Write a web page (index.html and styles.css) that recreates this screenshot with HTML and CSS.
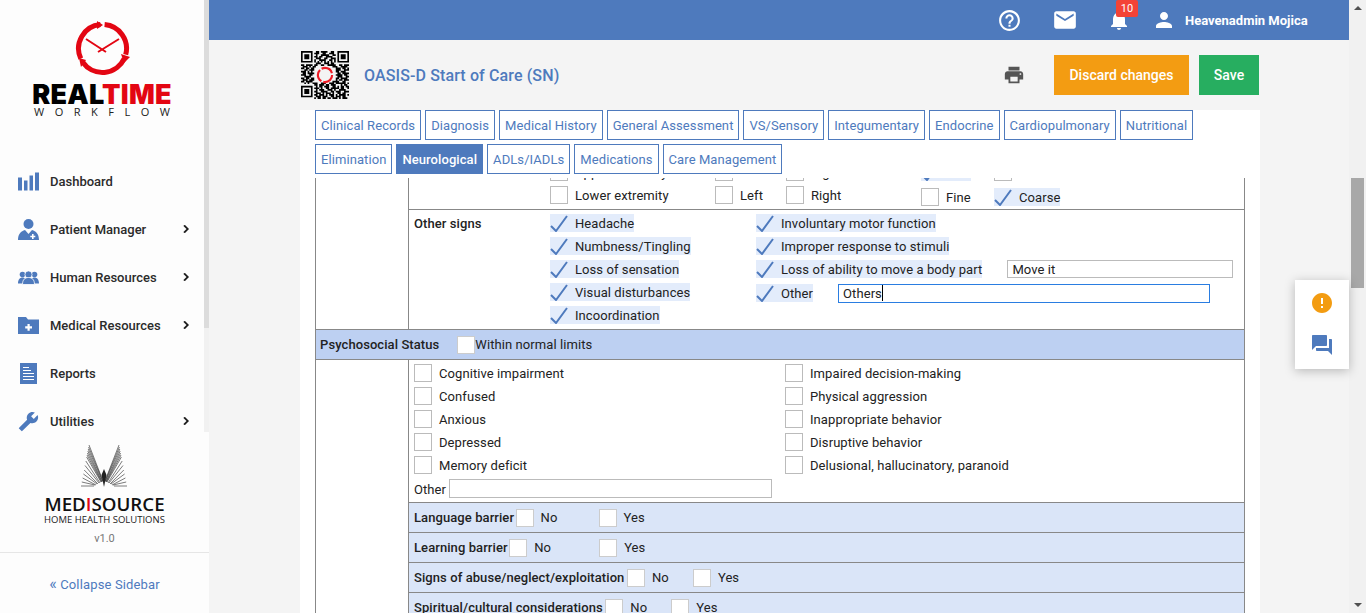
FILE: index.html
```html
<!DOCTYPE html>
<html lang="en">
<head>
  <meta charset="UTF-8" />
  <title>OASIS-D Start of Care (SN)</title>
  <link rel="stylesheet" href="styles.css">
</head>
<body>
  <aside class="sidebar">
    <div class="side-top">
      <div class="side-scroll">
        <div class="brand">
          <svg class="clock" viewBox="74 20 57 57" width="57" height="57">
            <g fill="none" stroke="#e30613" stroke-width="5">
              <path d="M104.600 24.600A24 24 0 0 1 125.700 54.700" />
              <path d="M124.200 58.600A24 24 0 0 1 82.800 62.300" />
              <path d="M80.800 58.600A24 24 0 0 1 100.400 24.600" />
            </g>
            <g fill="#e30613">
              <polygon points="97,21 97,29 103,25" />
              <polygon points="121,54 130,57 124,63" />
              <polygon points="86,60 81,67 79,58" />
            </g>
            <path d="M86 39L106 52M119 39L98 52" stroke="#e30613" stroke-width="2" fill="none" />
          </svg>
          <div class="brand-name">REAL<span>TIME</span></div>
          <div class="brand-sub">WORKFLOW</div>
        </div>
        <nav class="nav">
          <a class="nav-item">
            <svg class="nav-icon" viewBox="0 0 21 18"><path d="M0 5h4v13H0zM6 8h3.500v10H6zM11.500 3H15v15h-3.500zM17 0h4v18h-4z" /></svg>
            <span>Dashboard</span>
          </a>
          <a class="nav-item">
            <svg class="nav-icon" viewBox="0 0 21 21"><circle cx="10.500" cy="5" r="5" /><path d="M0 21c0-6 3-9 7-10l3.500 4 3.500-4c4 1 7 4 7 10z" /><path d="M14 15h1.600v1.700h1.700v1.600h-1.700V20H14v-1.700h-1.700v-1.600H14z" fill="#fff" /></svg>
            <span>Patient Manager</span>
            <svg class="chev" viewBox="0 0 24 24"><path d="M8.590 16.590L13.170 12 8.590 7.410 10 6l6 6-6 6z" /></svg>
          </a>
          <a class="nav-item">
            <svg class="nav-icon" viewBox="0 0 21 14"><circle cx="4.500" cy="4" r="2.800" /><circle cx="16.500" cy="4" r="2.800" /><path d="M0 13c0-4 2-6 4.500-6S9 9 9 13zM12 13c0-4 2-6 4.500-6s4.500 2 4.500 6z" /><circle cx="10.500" cy="4" r="3.600" stroke="#fff" stroke-width="0.8" /><path d="M4.500 14c0-5 2.500-7 6-7s6 2 6 7z" stroke="#fff" stroke-width="0.8" /></svg>
            <span>Human Resources</span>
            <svg class="chev" viewBox="0 0 24 24"><path d="M8.590 16.590L13.170 12 8.590 7.410 10 6l6 6-6 6z" /></svg>
          </a>
          <a class="nav-item">
            <svg class="nav-icon" viewBox="0 0 21 17"><path d="M0 0h8l2 2.500h11V17H0z" /><path d="M9.500 7h2.200v2.300H14v2.200h-2.300v2.300H9.500v-2.300H7.200V9.300h2.300z" fill="#fff" /></svg>
            <span>Medical Resources</span>
            <svg class="chev" viewBox="0 0 24 24"><path d="M8.590 16.590L13.170 12 8.590 7.410 10 6l6 6-6 6z" /></svg>
          </a>
          <a class="nav-item">
            <svg class="nav-icon" viewBox="0 0 21 21"><path d="M2 0h17v21H2z" /><path d="M5 4h6v1H5zM5 7h8v1H5zM5 10h11v1H5zM5 13h11v1H5zM5 16h11v1H5z" fill="#fff" /></svg>
            <span>Reports</span>
          </a>
          <a class="nav-item">
            <svg class="nav-icon" viewBox="0 0 24 24"><path transform="translate(24 0) scale(-1 1)" d="M22.700 19l-9.100-9.100c.9-2.300.4-5-1.500-6.900-2-2-5-2.400-7.400-1.300L9 6 6 9 1.600 4.700C.4 7.100.9 10.100 2.900 12.100c1.900 1.900 4.600 2.400 6.900 1.500l9.100 9.100c.4.4 1 .4 1.400 0l2.300-2.300c.5-.4.5-1.100.1-1.400z" /></svg>
            <span>Utilities</span>
            <svg class="chev" viewBox="0 0 24 24"><path d="M8.590 16.590L13.170 12 8.590 7.410 10 6l6 6-6 6z" /></svg>
          </a>
        </nav>
      </div>
      <div class="side-track"><div class="side-thumb"></div></div>
    </div>
    <div class="partner">
      <svg class="partner-mark" viewBox="78 442 54 46" width="54" height="46">
        <g fill="none" stroke="#444" stroke-width="0.7">
          <path d="M90 444L104 480M89.600 446L103.800 480M89.200 448L103.500 480M88.800 450L103.200 481M88.400 452L103 481M88 454L102.500 481M87.600 456L102 481M86.800 460L101 482M86 464.500L100 482M85.200 469L99 483M84.400 473L98 483M83.600 477L97 484M82.800 481L96 484M82 485L95 485" />
          <path transform="translate(210 0) scale(-1 1)" d="M90 444L104 480M89.600 446L103.800 480M89.200 448L103.500 480M88.800 450L103.200 481M88.400 452L103 481M88 454L102.500 481M87.600 456L102 481M86.800 460L101 482M86 464.500L100 482M85.200 469L99 483M84.400 473L98 483M83.600 477L97 484M82.800 481L96 484M82 485L95 485" />
        </g>
        <path d="M102.500 474L105 468L107.500 474L105 486z" fill="#222" />
      </svg>
      <div class="partner-name">MED<span>I</span>SOURCE</div>
      <div class="partner-sub">HOME HEALTH SOLUTIONS</div>
      <div class="version">v1.0</div>
    </div>
    <div class="collapse"><span class="collapse-arrows">&laquo;</span> Collapse Sidebar</div>
  </aside>

  <div class="main">
    <header class="topbar">
      <svg class="top-icon help" viewBox="0 0 24 24"><path d="M11 18h2v-2h-2v2zm1-16C6.480 2 2 6.480 2 12s4.480 10 10 10 10-4.480 10-10S17.520 2 12 2zm0 18c-4.410 0-8-3.590-8-8s3.590-8 8-8 8 3.590 8 8-3.590 8-8 8zm0-14c-2.210 0-4 1.790-4 4h2c0-1.100.9-2 2-2s2 .9 2 2c0 2-3 1.750-3 5h2c0-2.250 3-2.500 3-5 0-2.210-1.790-4-4-4z" /></svg>
      <svg class="top-icon mail" viewBox="0 0 24 24"><path d="M20 4H4c-1.100 0-1.990.9-1.990 2L2 18c0 1.100.9 2 2 2h16c1.100 0 2-.9 2-2V6c0-1.100-.9-2-2-2zm0 4l-8 5-8-5V6l8 5 8-5v2z" /></svg>
      <div class="bell-wrap">
        <svg class="top-icon" viewBox="0 0 24 24"><path d="M12 22c1.100 0 2-.9 2-2h-4c0 1.100.89 2 2 2zm6-6v-5c0-3.070-1.640-5.640-4.500-6.320V4c0-.83-.67-1.500-1.500-1.500s-1.500.67-1.500 1.500v.68C7.630 5.360 6 7.920 6 11v5l-2 2v1h16v-1l-2-2z" /></svg>
        <span class="badge">10</span>
      </div>
      <svg class="top-icon person" viewBox="0 0 24 24"><path d="M12 12c2.210 0 4-1.790 4-4s-1.790-4-4-4-4 1.790-4 4 1.790 4 4 4zm0 2c-2.670 0-8 1.340-8 4v2h16v-2c0-2.660-5.330-4-8-4z" /></svg>
      <span class="user-name">Heavenadmin Mojica</span>
    </header>

    <div class="content">
      <div class="page-head">
        <svg class="qr" viewBox="0 0 29 29" width="48" height="48">
          <path fill="none" stroke="#000" d="M0 .5h7M9 .5h2M12 .5h4M18 .5h2M22 .5h7
            M0 1.500h1M6 1.500h1M8 1.500h3M13 1.500h2M17 1.500h3M22 1.500h1M28 1.500h1
            M0 2.500h1M2 2.500h3M6 2.500h1M9 2.500h1M12 2.500h5M19 2.500h2M22 2.500h1M24 2.500h3M28 2.500h1
            M0 3.500h1M2 3.500h3M6 3.500h1M8 3.500h2M11 3.500h2M15 3.500h4M22 3.500h1M24 3.500h3M28 3.500h1
            M0 4.500h1M2 4.500h3M6 4.500h1M9 4.500h3M14 4.500h2M18 4.500h3M22 4.500h1M24 4.500h3M28 4.500h1
            M0 5.500h1M6 5.500h1M8 5.500h1M11 5.500h4M17 5.500h2M20 5.500h1M22 5.500h1M28 5.500h1
            M0 6.500h7M8 6.500h1M10 6.500h1M12 6.500h1M14 6.500h1M16 6.500h1M18 6.500h1M20 6.500h1M22 6.500h7
            M9 7.500h3M14 7.500h3M18 7.500h2
            M0 8.500h2M3 8.500h4M8 8.500h2M12 8.500h2M16 8.500h5M23 8.500h2M26 8.500h3
            M1 9.500h3M5 9.500h1M7 9.500h2M19 9.500h3M24 9.500h4
            M0 10.500h2M3 10.500h2M6 10.500h2M21 10.500h3M25 10.500h2M28 10.500h1
            M2 11.500h2M5 11.500h3M21 11.500h3M26 11.500h3
            M0 12.500h3M4 12.500h1M6 12.500h1M21 12.500h2M24 12.500h3
            M1 13.500h2M4 13.500h4M22 13.500h2M25 13.500h4
            M0 14.500h3M5 14.500h2M21 14.500h4M26 14.500h2
            M2 15.500h4M22 15.500h3M27 15.500h2
            M0 16.500h2M3 16.500h2M6 16.500h2M21 16.500h2M24 16.500h4
            M1 17.500h3M5 17.500h3M21 17.500h1M23 17.500h2M26 17.500h3
            M0 18.500h2M3 18.500h4M19 18.500h4M25 18.500h2
            M2 19.500h1M4 19.500h1M7 19.500h3M12 19.500h3M17 19.500h3M21 19.500h6M28 19.500h1
            M8 20.500h2M11 20.500h3M15 20.500h2M18 20.500h3M24 20.500h1M26 20.500h2
            M0 21.500h7M9 21.500h1M11 21.500h2M14 21.500h3M19 21.500h2M22 21.500h1M24 21.500h2M27 21.500h2
            M0 22.500h1M6 22.500h1M8 22.500h3M12 22.500h1M15 22.500h2M18 22.500h5M24 22.500h2M28 22.500h1
            M0 23.500h1M2 23.500h3M6 23.500h1M9 23.500h1M11 23.500h3M16 23.500h3M20 23.500h1M23 23.500h4
            M0 24.500h1M2 24.500h3M6 24.500h1M8 24.500h2M12 24.500h4M18 24.500h2M21 24.500h3M26 24.500h3
            M0 25.500h1M2 25.500h3M6 25.500h1M9 25.500h3M13 25.500h1M15 25.500h3M19 25.500h1M22 25.500h2M25 25.500h2
            M0 26.500h1M6 26.500h1M8 26.500h2M11 26.500h3M15 26.500h1M17 26.500h3M21 26.500h1M23 26.500h4M28 26.500h1
            M0 27.500h7M9 27.500h3M13 27.500h3M18 27.500h2M21 27.500h3M25 27.500h2
            M8 28.500h1M10 28.500h2M13 28.500h2M16 28.500h2M19 28.500h3M23 28.500h1M25 28.500h3" />
          <circle cx="14.500" cy="14.500" r="4.300" fill="none" stroke="#ee1c25" stroke-width="1.300" stroke-dasharray="7.800 1.200" />
        </svg>
        <h1 class="page-title">OASIS-D Start of Care (SN)</h1>
        <svg class="print" viewBox="0 0 24 24"><path d="M19 8H5c-1.660 0-3 1.340-3 3v6h4v4h12v-4h4v-6c0-1.660-1.340-3-3-3zm-3 11H8v-5h8v5zm3-7c-.55 0-1-.45-1-1s.45-1 1-1 1 .45 1 1-.45 1-1 1zm-1-9H6v4h12V3z" /></svg>
        <button class="btn btn-discard">Discard changes</button>
        <button class="btn btn-save">Save</button>
      </div>

      <div class="panel">
        <div class="tabs">
          <a class="tab">Clinical Records</a>
          <a class="tab">Diagnosis</a>
          <a class="tab">Medical History</a>
          <a class="tab">General Assessment</a>
          <a class="tab">VS/Sensory</a>
          <a class="tab">Integumentary</a>
          <a class="tab">Endocrine</a>
          <a class="tab">Cardiopulmonary</a>
          <a class="tab">Nutritional</a>
          <a class="tab">Elimination</a>
          <a class="tab active">Neurological</a>
          <a class="tab">ADLs/IADLs</a>
          <a class="tab">Medications</a>
          <a class="tab">Care Management</a>
        </div>

        <div class="sheet">
          <div class="row clipped-row">
            <div class="row-side"></div>
            <div class="row-body clipped-body">
              <div class="extremity">
                <label class="opt col-a"><i class="box"></i>Upper extremity</label>
                <label class="opt col-b"><i class="box"></i>Left</label>
                <label class="opt col-c"><i class="box"></i>Right</label>
                <label class="opt col-d checked"><i class="box"><svg viewBox="0 0 18 18"><path d="M1 12l5 5L17 2" /></svg></i>Gross</label>
                <label class="opt col-e"><i class="box"></i>Slow</label>
              </div>
              <div class="extremity">
                <label class="opt col-a"><i class="box"></i>Lower extremity</label>
                <label class="opt col-b"><i class="box"></i>Left</label>
                <label class="opt col-c"><i class="box"></i>Right</label>
                <label class="opt col-d raised"><i class="box"></i>Fine</label>
                <label class="opt col-e raised checked"><i class="box"><svg viewBox="0 0 18 18"><path d="M1 12l5 5L17 2" /></svg></i>Coarse</label>
              </div>
            </div>
          </div>

          <div class="row">
            <div class="row-side"></div>
            <div class="row-body signs">
              <div class="signs-title">Other signs</div>
              <div class="signs-col">
                <label class="opt checked"><i class="box"><svg viewBox="0 0 18 18"><path d="M1 12l5 5L17 2" /></svg></i>Headache</label>
                <label class="opt checked"><i class="box"><svg viewBox="0 0 18 18"><path d="M1 12l5 5L17 2" /></svg></i>Numbness/Tingling</label>
                <label class="opt checked"><i class="box"><svg viewBox="0 0 18 18"><path d="M1 12l5 5L17 2" /></svg></i>Loss of sensation</label>
                <label class="opt checked"><i class="box"><svg viewBox="0 0 18 18"><path d="M1 12l5 5L17 2" /></svg></i>Visual disturbances</label>
                <label class="opt checked"><i class="box"><svg viewBox="0 0 18 18"><path d="M1 12l5 5L17 2" /></svg></i>Incoordination</label>
              </div>
              <div class="signs-col">
                <label class="opt checked"><i class="box"><svg viewBox="0 0 18 18"><path d="M1 12l5 5L17 2" /></svg></i>Involuntary motor function</label>
                <label class="opt checked"><i class="box"><svg viewBox="0 0 18 18"><path d="M1 12l5 5L17 2" /></svg></i>Improper response to stimuli</label>
                <div class="opt-line">
                  <label class="opt checked"><i class="box"><svg viewBox="0 0 18 18"><path d="M1 12l5 5L17 2" /></svg></i>Loss of ability to move a body part</label>
                  <div class="field field-move">Move it</div>
                </div>
                <div class="opt-line other-line">
                  <label class="opt checked"><i class="box"><svg viewBox="0 0 18 18"><path d="M1 12l5 5L17 2" /></svg></i>Other</label>
                  <div class="field field-other"><span class="caret">Others</span></div>
                </div>
              </div>
            </div>
          </div>

          <div class="section-head">
            <strong>Psychosocial Status</strong>
            <i class="box"></i>Within normal limits
          </div>

          <div class="row">
            <div class="row-side"></div>
            <div class="row-body psycho">
              <div class="psycho-cols">
                <div class="psycho-col">
                  <label class="opt"><i class="box"></i>Cognitive impairment</label>
                  <label class="opt"><i class="box"></i>Confused</label>
                  <label class="opt"><i class="box"></i>Anxious</label>
                  <label class="opt"><i class="box"></i>Depressed</label>
                  <label class="opt"><i class="box"></i>Memory deficit</label>
                </div>
                <div class="psycho-col">
                  <label class="opt"><i class="box"></i>Impaired decision-making</label>
                  <label class="opt"><i class="box"></i>Physical aggression</label>
                  <label class="opt"><i class="box"></i>Inappropriate behavior</label>
                  <label class="opt"><i class="box"></i>Disruptive behavior</label>
                  <label class="opt"><i class="box"></i>Delusional, hallucinatory, paranoid</label>
                </div>
              </div>
              <div class="other-field"><span class="other-label">Other</span><div class="field field-psycho"></div></div>
            </div>
          </div>

          <div class="row">
            <div class="row-side"></div>
            <div class="row-body yn yn-language">
              <strong>Language barrier</strong>
              <span class="yn-no"><i class="box"></i>No</span>
              <span class="yn-yes"><i class="box"></i>Yes</span>
            </div>
          </div>
          <div class="row">
            <div class="row-side"></div>
            <div class="row-body yn yn-learning">
              <strong>Learning barrier</strong>
              <span class="yn-no"><i class="box"></i>No</span>
              <span class="yn-yes"><i class="box"></i>Yes</span>
            </div>
          </div>
          <div class="row">
            <div class="row-side"></div>
            <div class="row-body yn">
              <strong>Signs of abuse/neglect/exploitation</strong>
              <span class="yn-no"><i class="box"></i>No</span>
              <span class="yn-yes"><i class="box"></i>Yes</span>
            </div>
          </div>
          <div class="row">
            <div class="row-side"></div>
            <div class="row-body yn">
              <strong>Spiritual/cultural considerations</strong>
              <span class="yn-no"><i class="box"></i>No</span>
              <span class="yn-yes"><i class="box"></i>Yes</span>
            </div>
          </div>
        </div>
      </div>
    </div>

    <div class="float-card">
      <svg class="float-icon alert" viewBox="0 0 24 24"><path d="M12 2C6.480 2 2 6.480 2 12s4.480 10 10 10 10-4.480 10-10S17.520 2 12 2zm1 15h-2v-2h2v2zm0-4h-2V7h2v6z" /></svg>
      <svg class="float-icon chat" viewBox="0 0 24 24"><path d="M21 6h-2v9H6v2c0 .55.45 1 1 1h11l4 4V7c0-.55-.45-1-1-1zm-4 6V3c0-.55-.45-1-1-1H3c-.55 0-1 .45-1 1v14l4-4h10c.55 0 1-.45 1-1z" /></svg>
    </div>
  </div>

  <div class="page-scroll">
    <i class="arrow-up"></i>
    <div class="page-thumb"></div>
    <i class="arrow-down"></i>
  </div>
</body>
</html>
```

FILE: styles.css
```css
* {
  box-sizing: border-box;
}

html, body {
  height: 100%;
}

body {
  margin: 0;
  display: flex;
  height: 613px;
  overflow: hidden;
  font-family: Roboto, "Liberation Sans", sans-serif;
  font-size: 13px;
  color: #222;
  background-color: #f4f4f4;
}

/* sidebar */
.sidebar {
  width: 209px;
  flex: none;
  display: flex;
  flex-direction: column;
  background-color: #fdfdfd;
}

.side-top {
  height: 432px;
  display: flex;
  flex: none;
}

.side-scroll {
  flex: 1;
  overflow: hidden;
}

.side-track {
  width: 5px;
  background-color: #f1f1f1;
}

.side-thumb {
  height: 328px;
  background-color: #dcdcdc;
}

.brand {
  height: 157px;
  padding-top: 20px;
  display: flex;
  flex-direction: column;
  align-items: center;
  overflow: hidden;
}

.clock {
  display: block;
  flex: none;
}

.brand-name {
  margin-top: 6px;
  font-family: Inter, "Liberation Sans", sans-serif;
  font-weight: 900;
  font-size: 27px;
  line-height: 23px;
  letter-spacing: 0.2px;
  color: #000;
}

.brand-name span {
  color: #e30613;
}

.brand-sub {
  font-family: "Open Sans", sans-serif;
  font-size: 11px;
  line-height: 12px;
  letter-spacing: 10.5px;
  margin-right: -10.5px;
  color: #222;
}

.nav-item {
  height: 48px;
  display: flex;
  align-items: center;
  padding-left: 18px;
  font-weight: 500;
  color: #2b2b2b;
}

.nav-icon {
  width: 21px;
  height: 21px;
  margin-right: 11px;
  flex: none;
  fill: #4e7abd;
}

.chev {
  width: 16px;
  height: 16px;
  margin-left: auto;
  margin-right: 10px;
  fill: #111;
  stroke: #111;
  stroke-width: 0.8;
}

.partner {
  height: 121px;
  flex: none;
  border-bottom: 1px solid #e6e6e6;
  padding-top: 11px;
  display: flex;
  flex-direction: column;
  align-items: center;
}

.partner-mark {
  display: block;
  flex: none;
  margin-left: -1px;
}

.partner-name {
  margin-top: 5px;
  font-family: "Open Sans", sans-serif;
  font-weight: 600;
  font-size: 18.7px;
  line-height: 20px;
  color: #111;
}

.partner-name span {
  color: #e30613;
}

.partner-sub {
  font-family: "Open Sans", sans-serif;
  font-size: 9.500px;
  line-height: 11px;
  color: #222;
}

.version {
  margin-top: 7px;
  font-size: 11px;
  color: #777;
}

.collapse {
  padding-top: 23px;
  text-align: center;
  color: #4e7abd;
  line-height: 15px;
  letter-spacing: 0.15px;
}

.collapse-arrows {
  font-size: 16px;
  line-height: 15px;
}

/* main column */
.main {
  width: 1140px;
  flex: none;
  position: relative;
  display: flex;
  flex-direction: column;
}

.topbar {
  height: 40px;
  flex: none;
  background-color: #4e7abd;
  display: flex;
  align-items: center;
  color: #fff;
  padding-left: 788px;
}

.top-icon {
  width: 24px;
  height: 24px;
  fill: #fff;
  display: block;
  flex: none;
}

.help {
  width: 25px;
  height: 25px;
}

.mail {
  width: 26px;
  height: 26px;
  margin-left: 30px;
}

.bell-wrap {
  position: relative;
  margin-left: 29px;
}

.badge {
  position: absolute;
  top: -8px;
  left: 9px;
  width: 22px;
  height: 17px;
  border-radius: 2px;
  background-color: #f44336;
  color: #fff;
  font-size: 11px;
  line-height: 17px;
  text-align: center;
}

.person {
  margin-left: 21px;
}

.user-name {
  margin-left: 9px;
  font-weight: 700;
  font-size: 13px;
}

.content {
  flex: 1;
  min-height: 0;
  margin-left: 91px;
  width: 960px;
  display: flex;
  flex-direction: column;
}

.page-head {
  height: 70px;
  flex: none;
  display: flex;
  align-items: center;
  padding-left: 1px;
}

.qr {
  display: block;
  flex: none;
  margin-top: -1px;
}

.page-title {
  margin: 0 0 0 15px;
  font-size: 16px;
  font-weight: 500;
  letter-spacing: 0.12px;
  color: #4e7abd;
}

.print {
  width: 22px;
  height: 22px;
  margin-left: auto;
  margin-right: 29px;
  fill: #555;
  flex: none;
}

.btn {
  height: 40px;
  border: none;
  color: #fff;
  font-family: inherit;
  font-size: 14px;
  font-weight: 500;
  padding: 0;
}

.btn-discard {
  width: 135px;
  background-color: #f39c12;
}

.btn-save {
  width: 60px;
  margin-left: 10px;
  margin-right: 1px;
  background-color: #27ae60;
}

.panel {
  flex: 1;
  min-height: 0;
  background-color: #fff;
  padding-left: 15px;
  display: flex;
  flex-direction: column;
}

.tabs {
  height: 68px;
  flex: none;
  display: flex;
  flex-wrap: wrap;
  align-content: flex-start;
  gap: 4px;
}

.tab {
  height: 30px;
  padding: 0 5px;
  border: 1px solid #4e7abd;
  color: #4e7abd;
  font-size: 13px;
  line-height: 30px;
  letter-spacing: 0.08px;
  white-space: nowrap;
}

.tab.active {
  background-color: #4e7abd;
  color: #fff;
  font-weight: 500;
}

/* the form table, scrolled part way */
.sheet {
  width: 930px;
  flex: 1;
  min-height: 0;
  overflow: hidden;
  border-left: 1px solid #888;
  border-right: 1px solid #888;
  letter-spacing: 0.08px;
}

.row {
  display: flex;
}

.row-side {
  width: 92px;
  flex: none;
}

.row-body {
  flex: 1;
  border-left: 1px solid #888;
  min-width: 0;
}

.box {
  width: 18px;
  height: 18px;
  flex: none;
  display: block;
  border: 1px solid #bbb;
  background-color: #fff;
}

.box svg {
  display: block;
  width: 18px;
  height: 18px;
  fill: none;
  stroke: #4e7abd;
  stroke-width: 2;
}

.opt {
  display: inline-flex;
  align-items: center;
  height: 18px;
  gap: 7px;
  white-space: nowrap;
}

.opt.checked {
  background-color: #e3ecfb;
}

.checked .box {
  border: none;
  background: none;
}

.clipped-row {
  height: 32px;
}

.clipped-body {
  overflow: hidden;
  border-bottom: 1px solid #888;
}

.extremity {
  display: flex;
  height: 23px;
}

.extremity:first-child {
  margin-top: -15px;
}

.col-a {
  margin-left: 141px;
  width: 165px;
}

.col-b {
  width: 71px;
}

.col-c {
  width: 135px;
}

.col-d {
  width: 73px;
}

.raised {
  margin-top: 2px;
}

.col-d.checked {
  flex: none;
  width: 50px;
  margin-right: 23px;
}

.signs {
  display: flex;
  padding: 4px 0 0 5px;
  height: 119px;
}

.signs-title {
  width: 136px;
  flex: none;
  font-weight: 500;
  line-height: 19px;
}

.signs-col {
  width: 206px;
  flex: none;
  display: flex;
  flex-direction: column;
  align-items: flex-start;
  gap: 5px;
}

.opt-line {
  display: flex;
  align-items: center;
  height: 18px;
}

.field {
  height: 18px;
  border: 1px solid #bbb;
  background-color: #fff;
  padding-left: 4px;
  line-height: 18px;
  flex: none;
}

.field-move {
  width: 226px;
  margin-left: 25px;
}

.other-line {
  margin-top: 1px;
}

.field-other {
  width: 372px;
  margin-left: 25px;
  margin-top: 1px;
  border-color: #2a7de1;
  height: 19px;
}

.caret {
  display: inline-block;
  height: 16px;
  line-height: 17px;
  border-right: 1px solid #000;
  vertical-align: top;
}

.section-head {
  height: 31px;
  display: flex;
  align-items: center;
  background-color: #bdd0f2;
  border-top: 1px solid #888;
  border-bottom: 1px solid #888;
  padding-left: 4px;
}

.section-head strong {
  font-weight: 500;
  margin-right: 18px;
}

.section-head .box {
  border-color: #ccc;
}

.psycho {
  height: 143px;
  padding: 4px 0 0 5px;
  border-bottom: 1px solid #888;
}

.psycho-cols {
  display: flex;
}

.psycho-col {
  width: 371px;
  flex: none;
  display: flex;
  flex-direction: column;
  align-items: flex-start;
  gap: 5px;
}

.other-field {
  display: flex;
  gap: 3px;
  margin-top: 5px;
}

.other-label {
  padding-top: 3px;
}

.field-psycho {
  width: 323px;
  height: 19px;
}

.yn {
  height: 30px;
  display: flex;
  align-items: center;
  padding-left: 5px;
  background-color: #dae5f8;
  border-bottom: 1px solid #888;
}

.yn strong {
  font-weight: 500;
  margin-right: 2.5px;
}

.yn-language strong, .yn-learning strong {
  margin-right: 1.5px;
}

.yn .box {
  border-color: #ccc;
}

.yn-no, .yn-yes {
  display: flex;
  align-items: center;
  gap: 7px;
  flex: none;
}

.yn-no {
  width: 66px;
}

.yn-language .yn-no {
  width: 83px;
}

.yn-learning .yn-no {
  width: 90px;
}

/* floating action card */
.float-card {
  position: absolute;
  top: 280px;
  right: 0;
  width: 54px;
  height: 89px;
  background-color: #fff;
  box-shadow: 0 2px 10px rgba(0, 0, 0, 0.25);
  display: flex;
  flex-direction: column;
  align-items: center;
  padding-top: 11px;
  gap: 18px;
}

.float-icon {
  width: 24px;
  height: 24px;
  display: block;
}

.alert {
  fill: #f39c12;
}

.chat {
  fill: #4e7abd;
}

/* page scrollbar */
.page-scroll {
  width: 17px;
  flex: none;
  background-color: #f1f1f1;
  display: flex;
  flex-direction: column;
  align-items: center;
}

.arrow-up {
  margin-top: 6px;
  border-left: 4px solid transparent;
  border-right: 4px solid transparent;
  border-bottom: 4px solid #505050;
}

.page-thumb {
  width: 13px;
  height: 110px;
  margin-top: 168px;
  background-color: #a8a8a8;
}

.arrow-down {
  margin-top: auto;
  margin-bottom: 6px;
  border-left: 4px solid transparent;
  border-right: 4px solid transparent;
  border-top: 4px solid #505050;
}
```
